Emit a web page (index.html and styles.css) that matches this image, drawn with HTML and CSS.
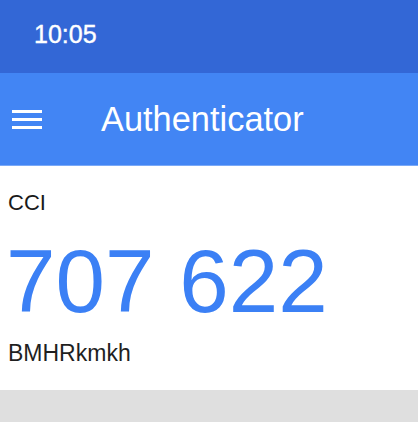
FILE: index.html
```html
<!DOCTYPE html>
<html>
<head>
<meta charset="utf-8">
<link rel="stylesheet" href="styles.css">
</head>
<body>
  <div class="status-bar"><span class="time">10:05</span></div>
  <header class="app-bar">
    <div class="menu" aria-label="menu"><span></span><span></span><span></span></div>
    <h1 class="title">Authenticator</h1>
  </header>
  <main class="list">
    <section class="entry">
      <div class="issuer">CCI</div>
      <div class="code">707 622</div>
      <div class="account">BMHRkmkh</div>
    </section>
  </main>
</body>
</html>
```
FILE: styles.css
```css
html, body {
  margin: 0;
  padding: 0;
  height: 100%;
}
body {
  background: #dfdfdf;
  font-family: "Liberation Sans", Arial, sans-serif;
}
.status-bar {
  background: #3367d6;
  height: 73px;
  box-sizing: border-box;
  padding: 22px 0 0 34px;
}
.time {
  display: block;
  color: #ffffff;
  font-size: 25px;
  line-height: 25px;
  -webkit-text-stroke: 0.4px #ffffff;
}
.app-bar {
  background: #4285f4;
  height: 93px;
  box-sizing: border-box;
  border-bottom: 1px solid #7aa9f7;
  display: flex;
  align-items: center;
  padding-left: 12px;
}
.menu {
  width: 30px;
  display: flex;
  flex-direction: column;
  gap: 5px;
}
.menu span {
  display: block;
  height: 3px;
  background: #ffffff;
}
.title {
  margin: 0 0 0 59px;
  color: #ffffff;
  font-weight: 400;
  font-size: 34.4px;
  line-height: 34px;
}
.list {
  background: #ffffff;
}
.entry {
  padding: 26px 8px 25px 8px;
}
.issuer {
  font-size: 22px;
  line-height: 22px;
  color: #1a1a1a;
}
.code {
  margin-top: 22px;
  font-size: 89px;
  line-height: 90px;
  color: #3b80f5;
  margin-left: -2px;
}
.account {
  margin-top: 16px;
  font-size: 23px;
  line-height: 23px;
  color: #1f1f1f;
}
```
